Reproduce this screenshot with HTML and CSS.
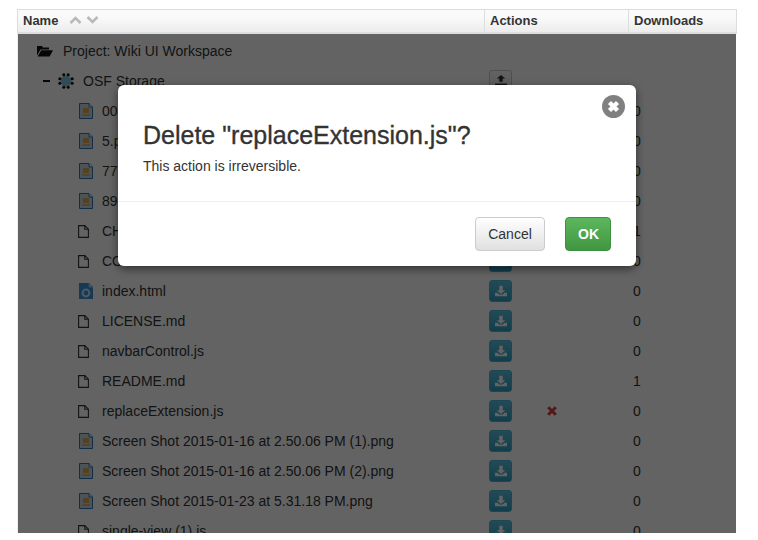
FILE: index.html
```html
<!DOCTYPE html>
<html lang="en">
<head>
<meta charset="utf-8">
<title>Wiki UI Workspace files</title>
<link rel="stylesheet" href="styles.css">
</head>
<body>
<svg class="defs" width="0" height="0" aria-hidden="true">
  <symbol id="i-img" viewBox="0 0 14 16">
    <path d="M.5.5h9.500l3.500 3.500v11.500h-13z" fill="#c4d8e8" stroke="#2f78b5"/>
    <path d="M10 .5v3.500h3.500" fill="#eef5fb" stroke="#2f78b5"/>
    <rect x="4" y="5" width="6" height="5" fill="#dca850"/>
    <rect x="3" y="11" width="8" height="2" fill="#d0b878"/>
  </symbol>
  <symbol id="i-web" viewBox="0 0 14 16">
    <path d="M0 0h10l4 4v12h-14z" fill="#3f94d6"/>
    <path d="M10 .5v3.500h3.500" fill="#cfe4f5" stroke="#8fc0e8"/>
    <circle cx="7" cy="10" r="3.400" fill="none" stroke="#cfe4f5" stroke-width="2"/>
  </symbol>
  <symbol id="i-file" viewBox="0 0 11 13">
    <path d="M.6.6h6.200l3.600 3.600v8.200h-9.800z" fill="none" stroke="#333" stroke-width="1.100"/>
    <path d="M6.800.6v3.600h3.600" fill="none" stroke="#333" stroke-width="1.100"/>
  </symbol>
  <symbol id="i-down" viewBox="0 0 14 14">
    <path d="M5 1h4v5h3l-5 4.500-5-4.500h3z" fill="#fff"/>
    <path d="M0 9h3l2 2h4l2-2h3v4h-14z" fill="#fff"/>
  </symbol>
  <symbol id="i-up" viewBox="0 0 14 14">
    <path d="M5 8h4v-4h3l-5-4-5 4h3z" fill="#333"/>
    <path d="M0 10h14v4h-14z" fill="#333"/>
  </symbol>
</svg>

<main class="table">
  <header class="head">
    <div class="hcell">Name
      <svg class="sort" width="30" height="10" viewBox="0 0 30 10" aria-hidden="true">
        <path d="M1.500 8l5-5 5 5M18.500 2l5 5 5-5" fill="none" stroke="#b9b9b9" stroke-width="2.600"/>
      </svg>
    </div>
    <div class="hcell hcell-b">Actions</div>
    <div class="hcell hcell-b">Downloads</div>
  </header>

  <div class="rows">
    <div class="row"><div class="name d0">
      <svg class="ico-folder" width="16" height="12" viewBox="0 0 16 12" aria-hidden="true"><path d="M0 1h5l1 1.500h6v2h-8.500l-3.500 6zM4.200 5.200h11.800l-3.400 6.300h-12z" fill="#111"/></svg>
      <span class="label">Project: Wiki UI Workspace</span></div><div class="act"></div><div class="num"></div></div>

    <div class="row"><div class="name d1">
      <span class="minus"></span>
      <svg class="ico-osf" width="16" height="16" viewBox="0 0 16 16" aria-hidden="true"><circle cx="8" cy="8" r="5.500" fill="#7fc0e0"/><g fill="#111"><circle cx="5.800" cy="1.800" r="1.500"/><circle cx="10.200" cy="1.800" r="1.500"/><circle cx="1.800" cy="5.800" r="1.500"/><circle cx="14.200" cy="5.800" r="1.500"/><circle cx="1.800" cy="10.200" r="1.500"/><circle cx="14.200" cy="10.200" r="1.500"/><circle cx="5.800" cy="14.200" r="1.500"/><circle cx="10.200" cy="14.200" r="1.500"/></g></svg>
      <span class="label">OSF Storage</span></div>
      <div class="act"><span class="btn btn-up"><svg width="12" height="12"><use href="#i-up"/></svg></span></div><div class="num"></div></div>

    <div class="row"><div class="name d2"><svg class="ico" width="14" height="16"><use href="#i-img"/></svg><span class="label">001.png</span></div><div class="act"><span class="btn"><svg width="12" height="12"><use href="#i-down"/></svg></span></div><div class="num">0</div></div>
    <div class="row"><div class="name d2"><svg class="ico" width="14" height="16"><use href="#i-img"/></svg><span class="label">5.png</span></div><div class="act"><span class="btn"><svg width="12" height="12"><use href="#i-down"/></svg></span></div><div class="num">0</div></div>
    <div class="row"><div class="name d2"><svg class="ico" width="14" height="16"><use href="#i-img"/></svg><span class="label">77.png</span></div><div class="act"><span class="btn"><svg width="12" height="12"><use href="#i-down"/></svg></span></div><div class="num">0</div></div>
    <div class="row"><div class="name d2"><svg class="ico" width="14" height="16"><use href="#i-img"/></svg><span class="label">89.png</span></div><div class="act"><span class="btn"><svg width="12" height="12"><use href="#i-down"/></svg></span></div><div class="num">0</div></div>
    <div class="row"><div class="name d2"><svg class="ico-f" width="11" height="13"><use href="#i-file"/></svg><span class="label">CHANGELOG.md</span></div><div class="act"><span class="btn"><svg width="12" height="12"><use href="#i-down"/></svg></span></div><div class="num">1</div></div>
    <div class="row"><div class="name d2"><svg class="ico-f" width="11" height="13"><use href="#i-file"/></svg><span class="label">CONTRIBUTING.md</span></div><div class="act"><span class="btn"><svg width="12" height="12"><use href="#i-down"/></svg></span></div><div class="num">0</div></div>
    <div class="row"><div class="name d2"><svg class="ico" width="14" height="16"><use href="#i-web"/></svg><span class="label">index.html</span></div><div class="act"><span class="btn"><svg width="12" height="12"><use href="#i-down"/></svg></span></div><div class="num">0</div></div>
    <div class="row"><div class="name d2"><svg class="ico-f" width="11" height="13"><use href="#i-file"/></svg><span class="label">LICENSE.md</span></div><div class="act"><span class="btn"><svg width="12" height="12"><use href="#i-down"/></svg></span></div><div class="num">0</div></div>
    <div class="row"><div class="name d2"><svg class="ico-f" width="11" height="13"><use href="#i-file"/></svg><span class="label">navbarControl.js</span></div><div class="act"><span class="btn"><svg width="12" height="12"><use href="#i-down"/></svg></span></div><div class="num">0</div></div>
    <div class="row"><div class="name d2"><svg class="ico-f" width="11" height="13"><use href="#i-file"/></svg><span class="label">README.md</span></div><div class="act"><span class="btn"><svg width="12" height="12"><use href="#i-down"/></svg></span></div><div class="num">1</div></div>
    <div class="row"><div class="name d2"><svg class="ico-f" width="11" height="13"><use href="#i-file"/></svg><span class="label">replaceExtension.js</span></div><div class="act"><span class="btn"><svg width="12" height="12"><use href="#i-down"/></svg></span><svg class="del" width="10" height="10" viewBox="0 0 10 10" aria-hidden="true"><path d="M1.200 1.200l7.600 7.600M8.800 1.200l-7.600 7.600" stroke="#d9403c" stroke-width="3"/></svg></div><div class="num">0</div></div>
    <div class="row"><div class="name d2"><svg class="ico" width="14" height="16"><use href="#i-img"/></svg><span class="label">Screen Shot 2015-01-16 at 2.50.06 PM (1).png</span></div><div class="act"><span class="btn"><svg width="12" height="12"><use href="#i-down"/></svg></span></div><div class="num">0</div></div>
    <div class="row"><div class="name d2"><svg class="ico" width="14" height="16"><use href="#i-img"/></svg><span class="label">Screen Shot 2015-01-16 at 2.50.06 PM (2).png</span></div><div class="act"><span class="btn"><svg width="12" height="12"><use href="#i-down"/></svg></span></div><div class="num">0</div></div>
    <div class="row"><div class="name d2"><svg class="ico" width="14" height="16"><use href="#i-img"/></svg><span class="label">Screen Shot 2015-01-23 at 5.31.18 PM.png</span></div><div class="act"><span class="btn"><svg width="12" height="12"><use href="#i-down"/></svg></span></div><div class="num">0</div></div>
    <div class="row"><div class="name d2"><svg class="ico-f" width="11" height="13"><use href="#i-file"/></svg><span class="label">single-view (1).js</span></div><div class="act"><span class="btn"><svg width="12" height="12"><use href="#i-down"/></svg></span></div><div class="num">0</div></div>

    <div class="overlay">
      <section class="modal" role="dialog" aria-modal="true">
        <svg class="close" width="23" height="23" viewBox="0 0 23 23" aria-label="Close"><circle cx="11.500" cy="11.500" r="11.500" fill="#808080"/><path d="M7.500 7.500l8 8M15.500 7.500l-8 8" stroke="#fff" stroke-width="4.400"/></svg>
        <div class="modal-head"><h1 class="title">Delete "replaceExtension.js"?</h1></div>
        <p class="desc">This action is irreversible.</p>
        <div class="modal-foot">
          <button class="mbtn mbtn-cancel">Cancel</button>
          <button class="mbtn mbtn-ok">OK</button>
        </div>
      </section>
    </div>
  </div>
</main>
</body>
</html>
```

FILE: styles.css
```css
* { box-sizing: border-box; }
html, body { margin: 0; height: 100%; overflow: hidden; background: #fff; }
body {
  padding: 9px 21px 7px 17px;
  font-family: "Liberation Sans", Arial, sans-serif;
  font-size: 14px;
  color: #333;
}
.defs { position: absolute; }
.table { height: 524px; display: flex; flex-direction: column; }
.head {
  flex: none;
  height: 25px;
  display: grid;
  grid-template-columns: 466px 144px 109px;
  border: 1px solid #ddd;
  border-bottom: 2px solid #ddd;
  background: linear-gradient(#fafafa, #fafafa 30%, #ececec);
}
.hcell {
  padding: 0 5px 2px;
  display: flex;
  align-items: center;
  font-size: 13px;
  font-weight: 700;
  color: #333;
}
.hcell-b { border-left: 1px solid #ddd; }
.sort { margin-left: 11px; }
.rows { flex: 1; min-height: 0; position: relative; overflow: hidden; margin-right: 1px; padding-top: 2px; background: #fff; border-left: 1px solid #eee; }
.row {
  height: 30px;
  display: grid;
  grid-template-columns: 467px 140px 108px;
}
.name { display: flex; align-items: center; }
.d0 { padding-left: 19px; }
.d1 { padding-left: 25px; }
.d2 { padding-left: 61px; }
.ico-folder { margin-right: 10px; }
.minus { width: 7px; height: 2px; background: #111; margin-right: 8px; }
.ico-osf { margin-right: 9px; }
.ico { margin-right: 9px; }
.ico-f { margin: 0 13px 0 -1px; }
.label { white-space: nowrap; }
.act { display: flex; align-items: center; padding-left: 4px; position: relative; }
.btn {
  width: 23px;
  height: 22px;
  display: flex;
  align-items: center;
  justify-content: center;
  border-radius: 3px;
  background: linear-gradient(#5bc0de, #2f9fc4);
  border: 1px solid #46b8da;
}
.btn-up { background: linear-gradient(#fff, #e0e0e0); border-color: #ccc; }
.del { margin-left: 35px; }
.num { display: flex; align-items: center; padding-left: 8px; }
.overlay {
  position: absolute;
  inset: 0;
  padding: 51px 0 0 100px;
  background: rgba(0, 0, 0, .61);
}
.modal {
  position: relative;
  width: 518px;
  height: 181px;
  background: #fff;
  border-radius: 6px;
  box-shadow: 0 3px 9px rgba(0, 0, 0, .5);
}
.close { position: absolute; top: 10px; right: 11px; }
.modal-head { padding: 35px 25px 0; }
.title { margin: 0; font-size: 25px; font-weight: 500; line-height: 30px; color: #333; -webkit-text-stroke: .35px #333; }
.desc { margin: 6px 25px 0; line-height: 20px; }
.modal-foot {
  margin-top: 25px;
  padding: 15px 25px 0;
  border-top: 1px solid #eee;
  display: flex;
  justify-content: flex-end;
  gap: 20px;
}
.mbtn {
  height: 34px;
  padding: 0 12px;
  border-radius: 4px;
  font: 14px "Liberation Sans", Arial, sans-serif;
}
.mbtn-cancel {
  width: 70px;
  border: 1px solid #ccc;
  background: linear-gradient(#fff, #e0e0e0);
  color: #333;
}
.mbtn-ok {
  width: 46px;
  border: 1px solid #3e8f3e;
  background: linear-gradient(#5cb85c, #419641);
  color: #fff;
  font-weight: 700;
}
```
